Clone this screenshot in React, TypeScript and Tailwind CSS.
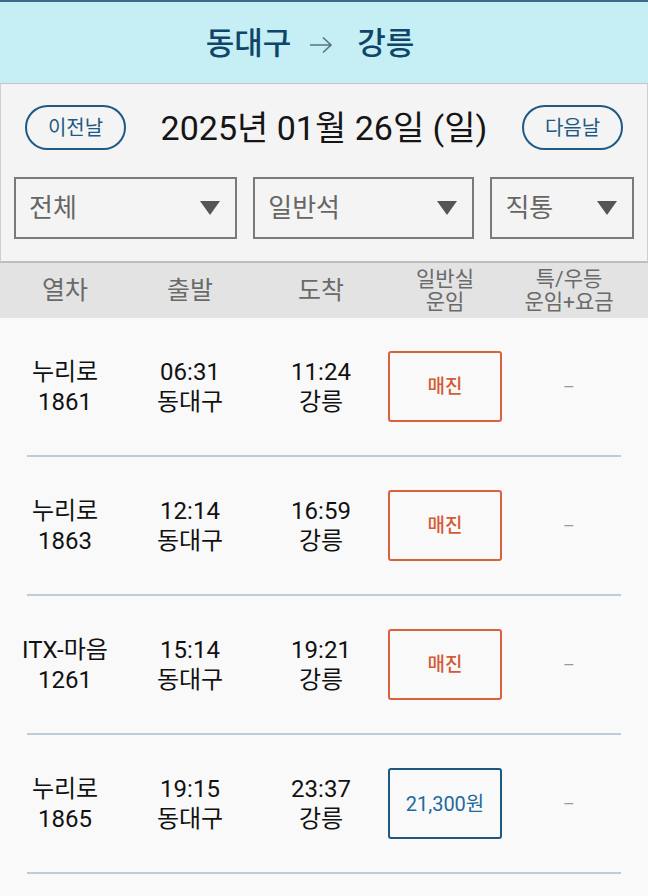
import React from 'react';

const font = { fontFamily: 'Roboto, "Noto Sans CJK KR", sans-serif' };

type Train = {
  name: string;
  no: string;
  dep: string;
  arr: string;
  fare: string | null;
};

const trains: Train[] = [
  { name: '누리로', no: '1861', dep: '06:31', arr: '11:24', fare: null },
  { name: '누리로', no: '1863', dep: '12:14', arr: '16:59', fare: null },
  { name: 'ITX-마음', no: '1261', dep: '15:14', arr: '19:21', fare: null },
  { name: '누리로', no: '1865', dep: '19:15', arr: '23:37', fare: '21,300원' },
];

const cols = 'grid grid-cols-[130px_120px_142px_106px_150px]';

export default function App() {
  return (
    <div className="w-[648px] h-[896px] overflow-hidden bg-[#f9f9f9]" style={font}>
      {/* Route header */}
      <div className="h-[84px] bg-[#c5eef5] border-t-2 border-[#3d6a88] border-b border-b-[#c4c8ca] flex items-center justify-center text-[#0e4568] text-[31px] font-medium pt-[4px] pr-[28px]">
        <span>동대구</span>
        <svg width="24" height="20" viewBox="0 0 24 20" className="ml-[18px] mr-[24px]">
          <path d="M1 10 H22 M14 2.5 L22 10 L14 17.5" stroke="#5a7386" strokeWidth="1.6" fill="none" />
        </svg>
        <span>강릉</span>
      </div>

      {/* Date & filters */}
      <div className="h-[179px] bg-[#f4f4f4] border-x border-[#cfcfcf] border-b-2 border-b-[#bdbdbd] px-[13px] pt-[21px]">
        <div className="flex items-center justify-between h-[45px] px-[11px]">
          <button className="w-[101px] h-[45px] rounded-full border-2 border-[#1f5a84] text-[#1f5a84] text-[20px]">이전날</button>
          <div className="text-[34px] leading-none text-[#151515]">2025년 01월 26일 (일)</div>
          <button className="w-[101px] h-[45px] rounded-full border-2 border-[#1f5a84] text-[#1f5a84] text-[20px]">다음날</button>
        </div>
        <div className="flex gap-[16px] mt-[27px]">
          <Select label="전체" w="w-[224px]" />
          <Select label="일반석" w="w-[222px]" />
          <Select label="직통" w="w-[144px]" />
        </div>
      </div>

      {/* Column header */}
      <div className={`${cols} h-[55px] bg-[#e3e3e3] text-[#6a6a6a] items-center text-center`}>
        <div className="text-[25px]">열차</div>
        <div className="text-[25px]">출발</div>
        <div className="text-[25px]">도착</div>
        <div className="text-[21px] leading-[23px]">일반실<br />운임</div>
        <div className="text-[21px] leading-[23px] pr-[8px]">특/우등<br />운임+요금</div>
      </div>

      {/* Train rows */}
      {trains.map((t, i) => (
        <div key={i} className="px-[27px]">
          <div className={`${cols} -mx-[27px] h-[137px] items-center text-center text-[24px] leading-[30px] text-[#111]`}>
            <div>{t.name}<br />{t.no}</div>
            <div>{t.dep}<br />동대구</div>
            <div>{t.arr}<br />강릉</div>
            <div className="flex justify-center">
              {t.fare ? (
                <div className="w-[114px] h-[71px] shrink-0 rounded-[3px] border-2 border-[#1d5882] flex items-center justify-center text-[20px] text-[#1d6a9e]">{t.fare}</div>
              ) : (
                <div className="w-[114px] h-[71px] shrink-0 rounded-[3px] border-2 border-[#d9613f] flex items-center justify-center text-[19px] font-medium text-[#d45a38]">매진</div>
              )}
            </div>
            <div className="text-[#9a9a9a] text-[18px] pr-[8px]">–</div>
          </div>
          <div className="h-[2px] bg-[#bfcbd8]" />
        </div>
      ))}
    </div>
  );
}

function Select({ label, w }: { label: string; w: string }) {
  return (
    <div className={`${w} h-[62px] border-2 border-[#7a7a7a] bg-[#f4f4f4] flex items-center justify-between pl-[13px] pr-[14px]`}>
      <span className="text-[26px] text-[#666]">{label}</span>
      <svg width="22" height="16" viewBox="0 0 22 16">
        <path d="M1 1 H21 L11 15 Z" fill="#555" />
      </svg>
    </div>
  );
}
